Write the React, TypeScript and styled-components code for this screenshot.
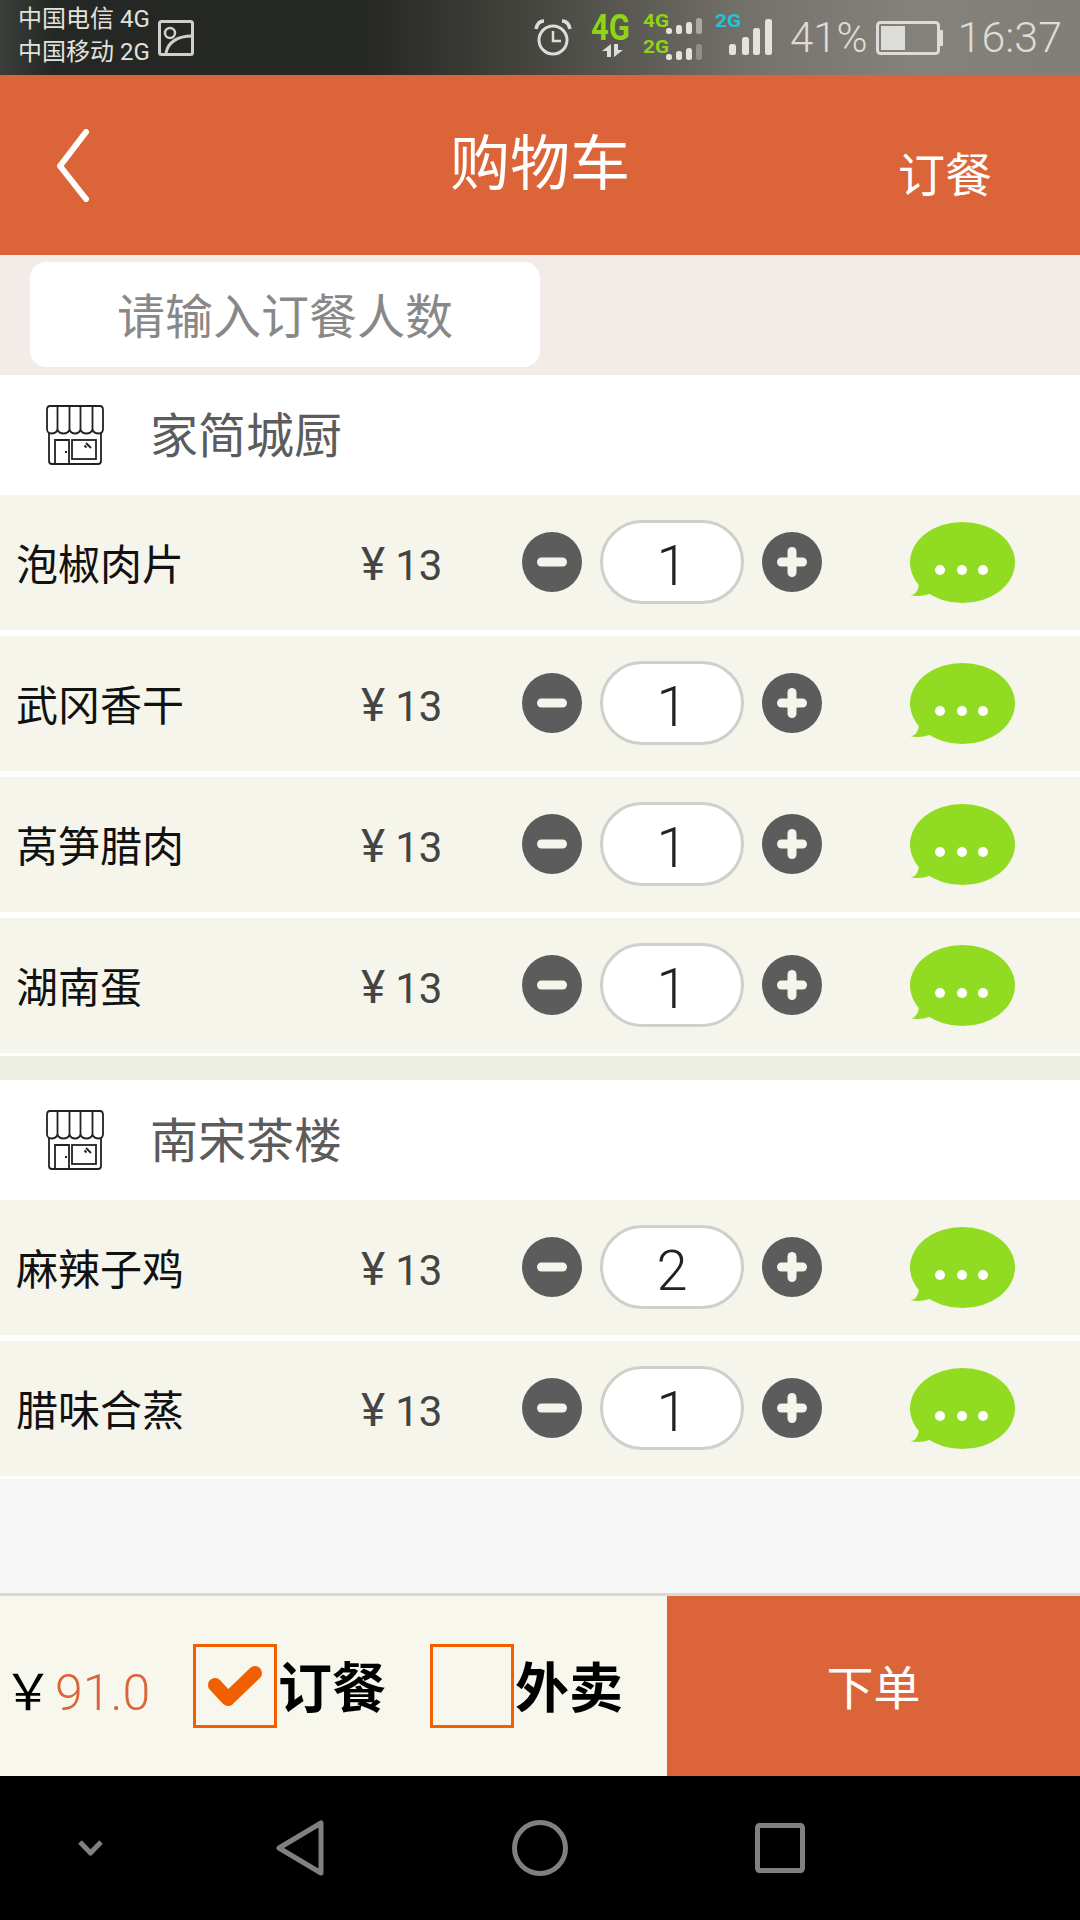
import React from "react";
import styled, {createGlobalStyle} from "styled-components";

const GlobalStyle = createGlobalStyle`
    html, body {
        margin: 0;
        padding: 0;
        background: #000;
    }

    * {
        box-sizing: border-box;
    }
`;

const CJK = `Roboto, "Noto Sans CJK SC", sans-serif`;

type DishType = {
    id: string;
    title: string;
    count: number;
};

type ShopType = {
    id: string;
    title: string;
    dishes: DishType[];
};

const shops: ShopType[] = [
    {
        id: "s1",
        title: "家简城厨",
        dishes: [
            {id: "d1", title: "泡椒肉片", count: 1},
            {id: "d2", title: "武冈香干", count: 1},
            {id: "d3", title: "莴笋腊肉", count: 1},
            {id: "d4", title: "湖南蛋", count: 1},
        ],
    },
    {
        id: "s2",
        title: "南宋茶楼",
        dishes: [
            {id: "d5", title: "麻辣子鸡", count: 2},
            {id: "d6", title: "腊味合蒸", count: 1},
        ],
    },
];

const Page = styled.div`
    width: 1080px;
    height: 1920px;
    display: flex;
    flex-direction: column;
    overflow: hidden;
    font-family: ${CJK};
    background: #f6f6f6;
`;

const StatusBar = styled.div`
    height: 75px;
    flex: none;
    display: flex;
    align-items: center;
    justify-content: space-between;
    padding: 0 18px;
    color: #e2e2de;
    background: linear-gradient(90deg, #3b3f3b 0, #242723 5%, #262823 34%, #3f3f3a 46%, #55544e 56%, #76736c 70%, #85827b 85%, #817e77 100%);
`;

const StatusGroup = styled.div`
    display: flex;
    align-items: center;
`;

const Carrier = styled.div`
    font-size: 24px;
    line-height: 33px;
    white-space: nowrap;
    margin: 0 8px 4px 0;
`;

const StatusText = styled.span<{ $gap: number; $size: number }>`
    font-size: ${({$size}) => $size}px;
    font-weight: 300;
    line-height: 75px;
    color: #dcdcd8;
    margin-right: ${({$gap}) => $gap}px;
`;

const StatusIcon = styled.svg<{ $gap?: number }>`
    display: block;
    flex: none;
    margin-right: ${({$gap}) => $gap || 0}px;
`;

const Header = styled.header`
    height: 180px;
    flex: none;
    display: grid;
    grid-template-columns: 1fr auto 1fr;
    align-items: center;
    background: #dc6439;
    color: #fff;
`;

const BackButton = styled.div`
    padding-left: 57px;
`;

const HeaderTitle = styled.h1`
    margin: 0;
    font-size: 60px;
    font-weight: 400;
    line-height: 1;
`;

const HeaderAction = styled.div`
    justify-self: end;
    padding: 12px 88px 0 0;
    font-size: 47px;
    font-weight: 400;
`;

const InputStrip = styled.div`
    height: 120px;
    flex: none;
    padding: 7px 0 0 30px;
    background: #f3ebe8;
`;

const PeopleInput = styled.input`
    display: block;
    width: 510px;
    height: 105px;
    border: none;
    border-radius: 16px;
    padding: 6px 0 0 87px;
    background: #fff;
    font-family: ${CJK};
    font-size: 48px;
    outline: none;

    &::placeholder {
        color: #888;
        opacity: 1;
    }
`;

const ShopHeader = styled.div`
    height: 120px;
    flex: none;
    display: flex;
    align-items: center;
    padding-left: 46px;
    background: #fff;
`;

const ShopTitle = styled.span`
    margin: 0 0 7px 46px;
    font-size: 48px;
    color: #5c5c5c;
`;

const DishList = styled.div`
    flex: none;
    display: flex;
    flex-direction: column;
    gap: 6px;
    padding-bottom: 3px;
    background: #fff;
`;

const DishRow = styled.div`
    height: 135px;
    display: flex;
    align-items: center;
    padding-left: 16px;
    background: #f5f5ec;
`;

const DishTitle = styled.span`
    width: 345px;
    margin-bottom: 3px;
    font-size: 42px;
    color: #111;
`;

const DishPrice = styled.span`
    width: 161px;
    margin-top: 2px;
    font-size: 42px;
    font-weight: 400;
    color: #444;
`;

const Yen = styled.span`
    font-size: 46px;
    margin-right: 10px;
`;

const RoundButton = styled.svg`
    display: block;
    flex: none;
    width: 60px;
    height: 60px;
    margin-top: -2px;
`;

const CountBox = styled.div`
    width: 144px;
    height: 84px;
    margin: -2px 18px 0 18px;
    padding-top: 8px;
    display: flex;
    align-items: center;
    justify-content: center;
    border: 3px solid #cfcfcb;
    border-radius: 42px;
    background: #fff;
    font-size: 56px;
    font-weight: 300;
    color: #222;
`;

const CommentBubble = styled.svg`
    display: block;
    flex: none;
    width: 105px;
    height: 82px;
    margin: 0 0 0 88px;
`;

const ShopDivider = styled.div`
    height: 24px;
    flex: none;
    background: #eeefe3;
`;

const EmptyArea = styled.div`
    flex: 1;
    background: #f6f6f6;
    border-bottom: 3px solid #d8d8d8;
`;

const BottomBar = styled.div`
    height: 180px;
    flex: none;
    display: flex;
    align-items: center;
    background: #f7f7ee;
`;

const Total = styled.div`
    width: 193px;
    padding: 4px 0 0 3px;
    font-size: 50px;
    white-space: nowrap;
    color: #000;
`;

const TotalValue = styled.span`
    margin-left: 2px;
    font-weight: 300;
    color: #dc6439;
`;

const OrderType = styled.div`
    width: 237px;
    display: flex;
    align-items: center;
    gap: 1px;
    font-size: 54px;
    font-weight: 700;
    line-height: 1;
    color: #000;
`;

const OrderLabel = styled.span`
    margin-top: 8px;
`;

const CheckBox = styled.div`
    width: 84px;
    height: 84px;
    flex: none;
    display: flex;
    align-items: center;
    justify-content: center;
    border: 3px solid #f06000;
`;

const OrderButton = styled.div`
    margin-left: auto;
    width: 413px;
    height: 100%;
    padding-bottom: 4px;
    display: flex;
    align-items: center;
    justify-content: center;
    background: #dc6439;
    color: #fff;
    font-size: 47px;
`;

const NavBar = styled.div`
    height: 144px;
    flex: none;
    display: flex;
    align-items: center;
    padding-left: 78px;
    background: #000;
`;

const NavIcon = styled.svg<{ $gap: number }>`
    display: block;
    flex: none;
    margin-right: ${({$gap}) => $gap}px;
`;

const ImageIcon = () => (
    <StatusIcon width="36" height="36" viewBox="0 0 36 36" fill="none" stroke="#cfcfcb" strokeWidth="3">
        <rect x="1.5" y="1.5" width="33" height="33" rx="2"/>
        <circle cx="12" cy="13" r="5" strokeWidth="2.5"/>
        <path d="M8 33C10 22 20 16 34 16"/>
    </StatusIcon>
);

const AlarmIcon = () => (
    <StatusIcon $gap={19} width="38" height="38" viewBox="0 0 38 38" fill="none" stroke="#dcdcd8" strokeWidth="3">
        <circle cx="19" cy="21" r="14"/>
        <path d="M19 12V22H27" strokeWidth="2.5"/>
        <path d="M2 10C3 5 6 2 10 2" strokeWidth="3.5"/>
        <path d="M36 10C35 5 32 2 28 2" strokeWidth="3.5"/>
    </StatusIcon>
);

const NetworkIcon = () => {
    const smallBars = [[75, 6], [85, 9], [95, 12], [105, 16]];
    const signalBars = [[138, 44], [151, 37], [162, 28], [174, 19]];
    return (
        <StatusIcon $gap={18} width="181" height="75" viewBox="0 0 181 75" fontFamily="Roboto, sans-serif" fontWeight="700">
            <text x="0" y="40" fontSize="36" fill="#8fd416" textLength="39" lengthAdjust="spacingAndGlyphs">4G</text>
            <polygon points="20,44 20,57 16,57 16,51 11,51" fill="#dcdcd8"/>
            <polygon points="23,44 27,44 27,50 32,50 23,57" fill="#dcdcd8"/>
            <text x="52" y="27" fontSize="19" fill="#8fd416" textLength="26" lengthAdjust="spacingAndGlyphs">4G</text>
            <text x="52" y="53" fontSize="19" fill="#8fd416" textLength="26" lengthAdjust="spacingAndGlyphs">2G</text>
            <text x="124" y="27" fontSize="19" fill="#1fc4d8" textLength="26" lengthAdjust="spacingAndGlyphs">2G</text>
            {smallBars.map(([x, h], i) => (
                <React.Fragment key={x}>
                    <rect x={x} y={34 - h} width="6" height={h} rx="2.5" fill={i === 3 ? "#a9a8a2" : "#e2e2de"}/>
                    <rect x={x} y={60 - h} width="6" height={h} rx="2.5" fill={i === 3 ? "#8f8e88" : "#e2e2de"}/>
                </React.Fragment>
            ))}
            {signalBars.map(([x, y]) => (
                <rect key={x} x={x} y={y} width="7" height={55 - y} rx="2.5" fill="#e2e2de"/>
            ))}
        </StatusIcon>
    );
};

const BatteryIcon = () => (
    <StatusIcon $gap={15} width="67" height="34" viewBox="0 0 67 34">
        <rect x="1.5" y="1.5" width="61" height="31" rx="3" fill="none" stroke="#dcdcd8" strokeWidth="3"/>
        <rect x="5" y="5" width="24" height="24" fill="#dcdcd8"/>
        <rect x="63" y="9" width="4" height="16" rx="1" fill="#dcdcd8"/>
    </StatusIcon>
);

const BackIcon = () => (
    <svg width="32" height="73" viewBox="0 0 32 73" fill="none" stroke="#fff" strokeWidth="6" strokeLinecap="round"
         strokeLinejoin="round" style={{display: "block"}}>
        <path d="M29 3L3 37L29 70"/>
    </svg>
);

const ShopIcon = () => (
    <svg width="58" height="60" viewBox="0 0 58 60" fill="none" stroke="#222" strokeWidth="1.8" style={{display: "block"}}>
        <path d="M1 5C1 2 2 1 4 1H54C56 1 57 2 57 5V24C57 27 55 28.500 52.500 28.500C49 28.500 47.500 27 46.500 25C45.500 27 43.500 28.500 40.500 28.500C37.500 28.500 35.500 27 34.500 25C33.500 27 31.500 28.500 29 28.500C26.500 28.500 24.500 27 23.500 25C22.500 27 20.500 28.500 17.500 28.500C14.500 28.500 12.500 27 11.500 25C10.500 27 8.500 28.500 5.500 28.500C3 28.500 1 27 1 24Z"/>
        <path d="M11.500 1V25M23.500 1V25M34.500 1V25M46.500 1V25"/>
        <path d="M3 28V56C3 58 4 59 6 59H52C54 59 55 58 55 56V28"/>
        <path d="M9 59V35H23V59"/>
        <rect x="26" y="35" width="24" height="19"/>
        <path d="M19 47H21M40 38L45 43M38.500 40.500L40.500 42.500"/>
    </svg>
);

const MinusIcon = () => (
    <RoundButton viewBox="0 0 60 60">
        <circle cx="30" cy="30" r="30" fill="#5c5c5c"/>
        <rect x="15" y="25.500" width="30" height="9" rx="4.500" fill="#f5f5ec"/>
    </RoundButton>
);

const PlusIcon = () => (
    <RoundButton viewBox="0 0 60 60">
        <circle cx="30" cy="30" r="30" fill="#5c5c5c"/>
        <rect x="15" y="25.500" width="30" height="9" rx="4.500" fill="#f5f5ec"/>
        <rect x="25.500" y="15" width="9" height="30" rx="4.500" fill="#f5f5ec"/>
    </RoundButton>
);

const BubbleIcon = () => (
    <CommentBubble viewBox="0 0 105 82">
        <ellipse cx="52.500" cy="40.500" rx="52.500" ry="40.500" fill="#91dc23"/>
        <path d="M9 60C9 68 5 74 0 73C7 75 16 74 24 70Z" fill="#91dc23"/>
        <circle cx="30" cy="48" r="5" fill="#fff"/>
        <circle cx="52" cy="48" r="5" fill="#fff"/>
        <circle cx="73" cy="48" r="5" fill="#fff"/>
    </CommentBubble>
);

const Dish = ({title, count}: DishType) => (
    <DishRow>
        <DishTitle>{title}</DishTitle>
        <DishPrice><Yen>¥</Yen>13</DishPrice>
        <MinusIcon/>
        <CountBox>{count}</CountBox>
        <PlusIcon/>
        <BubbleIcon/>
    </DishRow>
);

export default function App() {
    return (
        <Page>
            <GlobalStyle/>
            <StatusBar>
                <StatusGroup>
                    <Carrier>中国电信 4G<br/>中国移动 2G</Carrier>
                    <ImageIcon/>
                </StatusGroup>
                <StatusGroup>
                    <AlarmIcon/>
                    <NetworkIcon/>
                    <StatusText $gap={8} $size={42}>41%</StatusText>
                    <BatteryIcon/>
                    <StatusText $gap={0} $size={43}>16:37</StatusText>
                </StatusGroup>
            </StatusBar>
            <Header>
                <BackButton><BackIcon/></BackButton>
                <HeaderTitle>购物车</HeaderTitle>
                <HeaderAction>订餐</HeaderAction>
            </Header>
            <InputStrip>
                <PeopleInput placeholder="请输入订餐人数"/>
            </InputStrip>
            {shops.map((shop, index) => (
                <React.Fragment key={shop.id}>
                    {index > 0 && <ShopDivider/>}
                    <ShopHeader>
                        <ShopIcon/>
                        <ShopTitle>{shop.title}</ShopTitle>
                    </ShopHeader>
                    <DishList>
                        {shop.dishes.map(dish => <Dish key={dish.id} {...dish}/>)}
                    </DishList>
                </React.Fragment>
            ))}
            <EmptyArea/>
            <BottomBar>
                <Total>{"\uFFE5"}<TotalValue>91.0</TotalValue></Total>
                <OrderType>
                    <CheckBox>
                        <svg width="56" height="42" viewBox="0 0 56 42" fill="none" stroke="#f06000" strokeWidth="14"
                             strokeLinecap="round" strokeLinejoin="round">
                            <path d="M8 20L21 34L48 8"/>
                        </svg>
                    </CheckBox>
                    <OrderLabel>订餐</OrderLabel>
                </OrderType>
                <OrderType>
                    <CheckBox/>
                    <OrderLabel>外卖</OrderLabel>
                </OrderType>
                <OrderButton>下单</OrderButton>
            </BottomBar>
            <NavBar>
                <NavIcon $gap={173} width="25" height="16" viewBox="0 0 25 16" fill="none" stroke="#808080"
                         strokeWidth="5" strokeLinejoin="round">
                    <path d="M2 2L12.500 13L23 2"/>
                </NavIcon>
                <NavIcon $gap={188} width="48" height="56" viewBox="0 0 48 56" fill="none" stroke="#808080"
                         strokeWidth="5" strokeLinejoin="round">
                    <path d="M45 3V53L3 28Z"/>
                </NavIcon>
                <NavIcon $gap={187} width="56" height="56" viewBox="0 0 56 56" fill="none" stroke="#808080"
                         strokeWidth="5">
                    <circle cx="28" cy="28" r="25.500"/>
                </NavIcon>
                <NavIcon $gap={0} width="50" height="50" viewBox="0 0 50 50" fill="none" stroke="#808080"
                         strokeWidth="5" strokeLinejoin="round">
                    <rect x="2.500" y="2.500" width="45" height="45" rx="2"/>
                </NavIcon>
            </NavBar>
        </Page>
    );
}
